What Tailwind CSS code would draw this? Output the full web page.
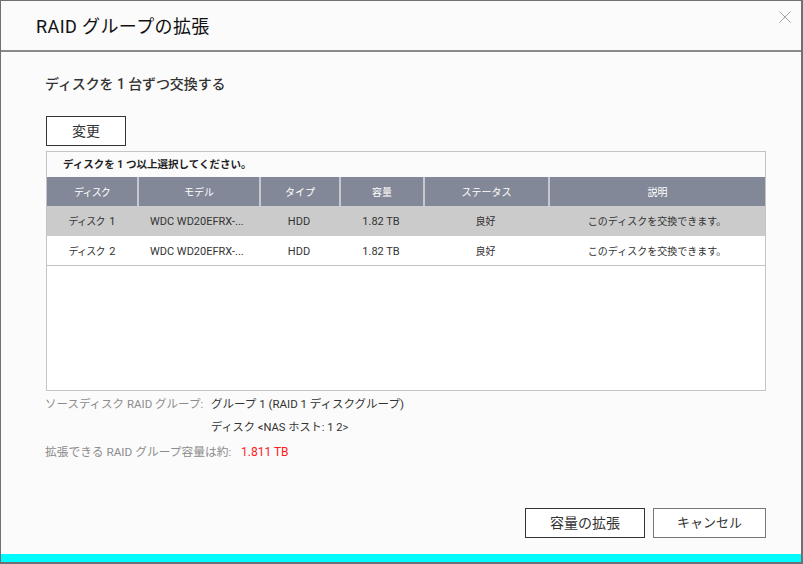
<!DOCTYPE html>
<html lang="ja">

<head>
    <meta charset="UTF-8">
    <script src="https://cdn.jsdelivr.net/npm/@tailwindcss/browser@4"></script>
    <title>RAID グループの拡張</title>
</head>

<body class="bg-[#6f7073] font-['Roboto','Noto_Sans_CJK_JP',sans-serif] overflow-hidden">
    <div class="w-[803px] h-[564px] pt-px pb-[2px] pl-px pr-[2px]">
        <div class="relative h-full bg-[#fbfbfb] flex flex-col">
            <!-- header -->
            <div class="h-[51px] shrink-0 border-b-2 border-[#8a8a8a] pl-[35px] pt-[12px]">
                <h2 class="text-[18px] leading-[27px] tracking-[0.4px] font-normal text-[#111]">RAID グループの拡張</h2>
            </div>
            <button class="absolute top-[10px] right-[10px] w-[12px] h-[12px] text-[#a3a3a3]">
                <svg viewBox="0 0 12 12" class="w-[12px] h-[12px]" fill="none" stroke="currentColor" stroke-width="1">
                    <path d="M0.5 0.5L11.5 11.5M11.5 0.5L0.5 11.5" />
                </svg>
            </button>

            <!-- body -->
            <div class="flex-1 flex flex-col pl-[45px] pr-[35px]">
                <p class="-ml-px mt-[22px] text-[14px] leading-[21px] tracking-[-0.1px] font-medium text-[#333]">ディスクを 1 台ずつ交換する</p>
                <button class="mt-[21px] w-[80px] h-[30px] border border-[#333] bg-white text-[14px] text-[#333]">変更</button>

                <div class="mt-[5px] h-[240px] border border-[#c4c4c4] bg-white flex flex-col">
                    <div class="h-[25px] shrink-0 bg-[#fbfbfb] pl-[16px] text-[10.5px] leading-[25px] font-bold text-[#222]">ディスクを 1 つ以上選択してください。</div>
                    <div class="h-[29px] shrink-0 bg-[#828897] flex text-[10px] leading-[31px] text-white text-center">
                        <div class="w-[92px] border-r-2 border-[#c5c8cf] tracking-[-0.8px]">ディスク</div>
                        <div class="w-[122px] border-r-2 border-[#c5c8cf]">モデル</div>
                        <div class="w-[80px] border-r-2 border-[#c5c8cf]">タイプ</div>
                        <div class="w-[84px] border-r-2 border-[#c5c8cf]">容量</div>
                        <div class="w-[125px] border-r-2 border-[#c5c8cf]">ステータス</div>
                        <div class="flex-1">説明</div>
                    </div>
                    <div class="h-[30px] shrink-0 bg-[#cbcbcb] flex text-[11px] leading-[31px] text-[#333] text-center">
                        <div class="w-[90px]"><span class="text-[10px] tracking-[-0.8px] mr-[2px]">ディスク</span> 1</div>
                        <div class="w-[122px] pl-[13px] text-left">WDC WD20EFRX-...</div>
                        <div class="w-[80px]">HDD</div>
                        <div class="w-[84px]">1.82 TB</div>
                        <div class="w-[125px] text-[10px]">良好</div>
                        <div class="flex-1 text-[10px] pl-[1px]">このディスクを交換できます。</div>
                    </div>
                    <div class="h-[30px] shrink-0 border-b border-[#c4c4c4] flex text-[11px] leading-[31px] text-[#333] text-center">
                        <div class="w-[90px]"><span class="text-[10px] tracking-[-0.8px] mr-[2px]">ディスク</span> 2</div>
                        <div class="w-[122px] pl-[13px] text-left">WDC WD20EFRX-...</div>
                        <div class="w-[80px]">HDD</div>
                        <div class="w-[84px]">1.82 TB</div>
                        <div class="w-[125px] text-[10px]">良好</div>
                        <div class="flex-1 text-[10px] pl-[1px]">このディスクを交換できます。</div>
                    </div>
                </div>

                <div class="-ml-px mt-[1px] text-[11.5px] leading-[24px]">
                    <div class="flex">
                        <span class="w-[166px] text-[#8c8c8c]">ソースディスク RAID グループ:</span>
                        <span class="text-[#333]">グループ 1 (RAID 1 ディスクグループ)</span>
                    </div>
                    <div class="pl-[166px] text-[11.2px] text-[#333]">ディスク &lt;NAS ホスト: 1 2&gt;</div>
                    <div class="flex">
                        <span class="w-[196px] text-[11.75px] text-[#8c8c8c]">拡張できる RAID グループ容量は約:</span>
                        <span class="text-[12px] text-[#ff1a1a]">1.811 TB</span>
                    </div>
                </div>

                <div class="mt-auto mb-[16px] flex justify-end gap-[8px]">
                    <button class="w-[120px] h-[30px] border border-[#333] bg-white text-[14px] text-[#333]">容量の拡張</button>
                    <button class="w-[113px] h-[30px] border border-[#777] bg-white text-[13px] text-[#333]">キャンセル</button>
                </div>
            </div>

            <div class="h-[8px] shrink-0 bg-[#00fbff]"></div>
        </div>
    </div>
</body>

</html>
